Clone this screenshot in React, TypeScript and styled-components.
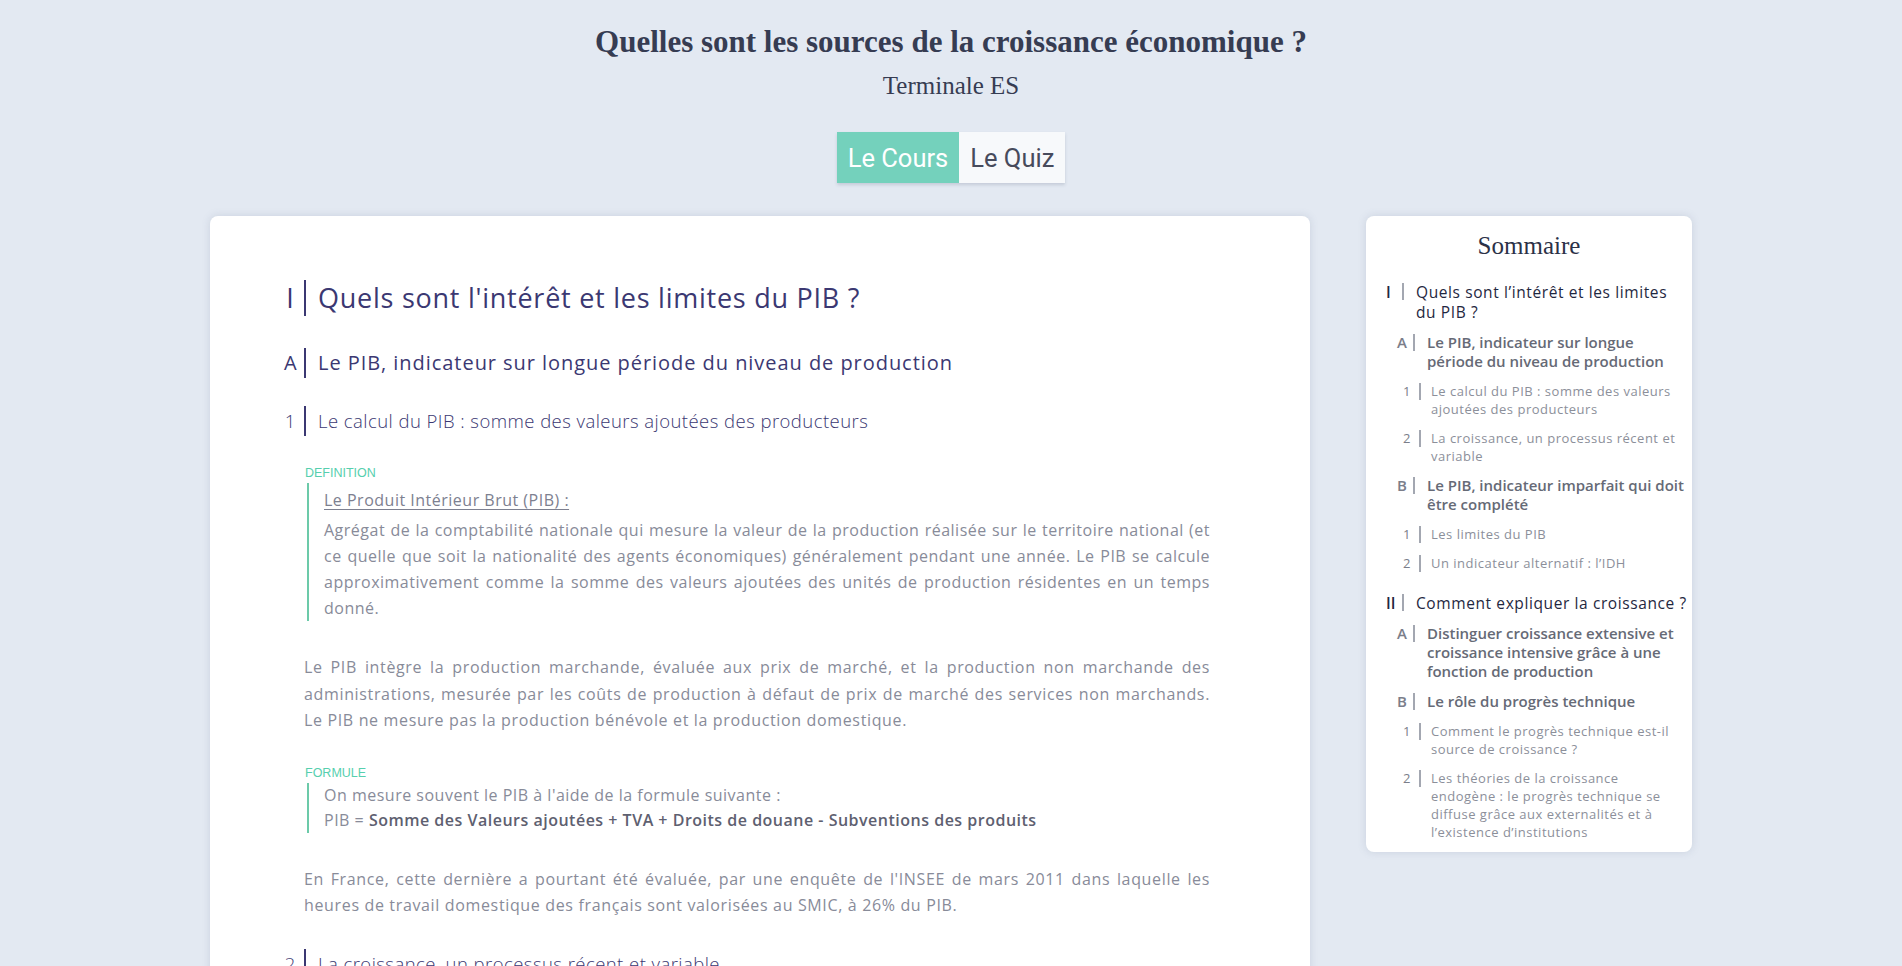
import React from 'react'
import styled, { createGlobalStyle } from 'styled-components'

const GlobalStyle = createGlobalStyle`
	html, body {
		margin: 0;
		padding: 0;
		background: #e3e9f2;
	}
	body {
		font-family: 'Open Sans', Lato, sans-serif;
	}
`

const Page = styled.div`
	min-height: 966px;
	padding-top: 24px;
`

const Header = styled.header`
	display: flex;
	flex-direction: column;
	align-items: center;
	color: #363c52;
`

const Title = styled.h1`
	margin: 0;
	font-family: 'Liberation Serif', 'DejaVu Serif', serif;
	font-weight: 700;
	font-size: 31px;
	line-height: 36px;
`

const Subtitle = styled.h2`
	margin: 12px 0 0;
	font-family: 'Liberation Serif', 'DejaVu Serif', serif;
	font-weight: 400;
	font-size: 25px;
	line-height: 28px;
`

const Tabs = styled.nav`
	display: flex;
	margin-top: 32px;
	box-shadow: 0 2px 3px rgba(60, 70, 100, 0.18);
`

const Tab = styled.button<{ active?: boolean }>`
	height: 51px;
	padding: 0 11px;
	border: none;
	font-family: Roboto, 'Liberation Sans', sans-serif;
	font-size: 25.5px;
	background: ${({ active }) => (active ? '#74d1bc' : '#f7f9fb')};
	color: ${({ active }) => (active ? '#ffffff' : '#474b5c')};
	cursor: pointer;
`

const Layout = styled.main`
	display: flex;
	justify-content: center;
	align-items: flex-start;
	gap: 56px;
	margin-top: 33px;
`

const Card = styled.article`
	box-sizing: border-box;
	width: 1100px;
	padding: 64px 100px 40px 74px;
	background: #fff;
	border-radius: 8px;
	box-shadow: 0 0 8px rgba(90, 105, 140, 0.18);
`

const headSize = { 1: 27, 2: 20, 3: 18.5 }
const headTrack = { 1: 0.75, 2: 0.95, 3: 0.45 }

const Heading = styled.div<{ level: 1 | 2 | 3; gap?: number }>`
	display: flex;
	align-items: flex-start;
	color: #3b3872;
	font-size: ${({ level }) => headSize[level]}px;
	letter-spacing: ${({ level }) => headTrack[level]}px;
	line-height: ${({ level }) => (level === 1 ? 36 : 30)}px;
	font-weight: ${({ level }) => (level === 3 ? 300 : 400)};
	margin-top: ${({ level, gap }) => gap ?? (level === 1 ? 0 : level === 2 ? 32 : 28)}px;
`

const HeadNum = styled.span`
	flex: none;
	width: 22px;
	padding-right: 8px;
	box-sizing: border-box;
	text-align: center;
	letter-spacing: 0;
	border-right: 2px solid #3b3872;
`

const HeadText = styled.span`
	margin-left: 12px;
`

const Label = styled.div<{ gap?: number }>`
	margin: ${({ gap }) => gap ?? 29}px 0 0 21px;
	font-family: 'Liberation Sans', sans-serif;
	font-size: 12.5px;
	line-height: 16px;
	color: #56cfae;
`

const Box = styled.div<{ tight?: boolean }>`
	margin: 2px 0 0 23px;
	padding: ${({ tight }) => (tight ? 0 : 4)}px 0 0 15px;
	border-left: 2px solid #6ccaa9;
`

const BoxTitle = styled.div`
	font-size: 16px;
	letter-spacing: 0.5px;
	line-height: 26px;
	color: #7d8090;
	text-decoration: underline;
	text-underline-offset: 3px;
`

const Text = styled.p<{ gap?: number }>`
	margin: ${({ gap }) => gap ?? 0}px 0 0;
	font-size: 16px;
	letter-spacing: 0.5px;
	line-height: 26px;
	color: #888b99;
	text-align: justify;
`

const FormulaLine = styled(Text)`
	line-height: 25px;
`

const Para = styled(Text)`
	margin-left: 20px;
	letter-spacing: 0.65px;
	line-height: 26.5px;
`

const Strong = styled.b`
	font-weight: 600;
	color: #5e6070;
`

const Aside = styled.aside`
	box-sizing: border-box;
	width: 326px;
	padding: 16px 11px 11px;
	background: #fff;
	border-radius: 8px;
	box-shadow: 0 0 8px rgba(90, 105, 140, 0.18);
`

const AsideTitle = styled.h3`
	margin: 0 0 22px;
	text-align: center;
	font-family: 'Liberation Serif', 'DejaVu Serif', serif;
	font-weight: 400;
	font-size: 25px;
	line-height: 28px;
	color: #2b3147;
`

const Summary = styled.div`
	padding-left: 9px;
	margin-right: -7px;
`

const Item = styled.div<{ level: 1 | 2 | 3; first?: boolean }>`
	display: flex;
	align-items: flex-start;
	margin-top: ${({ level, first }) => (first ? 0 : level === 1 ? 21 : 11)}px;
	margin-right: ${({ level }) => (level === 3 ? 11 : 0)}px;
	padding-left: ${({ level }) => (level === 1 ? 0 : level === 2 ? 11 : 17)}px;
	font-size: ${({ level }) => (level === 1 ? 15.5 : level === 2 ? 15 : 13)}px;
	letter-spacing: ${({ level }) => (level === 1 ? 0.6 : level === 2 ? 0 : 0.5)}px;
	line-height: ${({ level }) => (level === 1 ? 20 : level === 2 ? 19 : 18)}px;
	font-weight: ${({ level }) => (level === 2 ? 600 : 400)};
	color: ${({ level }) => (level === 1 ? '#1f2841' : level === 2 ? '#666a76' : '#8c8f9a')};
`

const ItemNum = styled.span<{ level: 1 | 2 | 3 }>`
	flex: none;
	width: 16px;
	letter-spacing: 0;
	font-weight: ${({ level }) => (level === 3 ? 400 : 600)};
	color: ${({ level }) => (level === 1 ? '#1f2841' : '#7b7e8a')};
`

const ItemBar = styled.span`
	flex: none;
	width: 2px;
	height: 17px;
	margin-top: 1px;
	background: #a3a7b1;
`

const ItemText = styled.span<{ level: 1 | 2 | 3 }>`
	margin-left: ${({ level }) => (level === 3 ? 10 : 12)}px;
`

type Entry = { level: 1 | 2 | 3; num: string; text: string }

const summary: Entry[] = [
	{ level: 1, num: 'I', text: 'Quels sont l’intérêt et les limites du PIB ?' },
	{ level: 2, num: 'A', text: 'Le PIB, indicateur sur longue période du niveau de production' },
	{ level: 3, num: '1', text: 'Le calcul du PIB : somme des valeurs ajoutées des producteurs' },
	{ level: 3, num: '2', text: 'La croissance, un processus récent et variable' },
	{ level: 2, num: 'B', text: 'Le PIB, indicateur imparfait qui doit être complété' },
	{ level: 3, num: '1', text: 'Les limites du PIB' },
	{ level: 3, num: '2', text: 'Un indicateur alternatif : l’IDH' },
	{ level: 1, num: 'II', text: 'Comment expliquer la croissance ?' },
	{ level: 2, num: 'A', text: 'Distinguer croissance extensive et croissance intensive grâce à une fonction de production' },
	{ level: 2, num: 'B', text: 'Le rôle du progrès technique' },
	{ level: 3, num: '1', text: 'Comment le progrès technique est-il source de croissance ?' },
	{ level: 3, num: '2', text: 'Les théories de la croissance endogène : le progrès technique se diffuse grâce aux externalités et à l’existence d’institutions' },
]

const App = () => (
	<Page>
		<GlobalStyle />
		<Header>
			<Title>Quelles sont les sources de la croissance économique ?</Title>
			<Subtitle>Terminale ES</Subtitle>
			<Tabs>
				<Tab active>Le Cours</Tab>
				<Tab>Le Quiz</Tab>
			</Tabs>
		</Header>
		<Layout>
			<Card>
				<Heading level={1}>
					<HeadNum>I</HeadNum>
					<HeadText>Quels sont l'intérêt et les limites du PIB ?</HeadText>
				</Heading>
				<Heading level={2}>
					<HeadNum>A</HeadNum>
					<HeadText>Le PIB, indicateur sur longue période du niveau de production</HeadText>
				</Heading>
				<Heading level={3}>
					<HeadNum>1</HeadNum>
					<HeadText>Le calcul du PIB : somme des valeurs ajoutées des producteurs</HeadText>
				</Heading>

				<Label>DEFINITION</Label>
				<Box>
					<BoxTitle>Le Produit Intérieur Brut (PIB) :</BoxTitle>
					<Text gap={4}>
						Agrégat de la comptabilité nationale qui mesure la valeur de la production réalisée sur le
						territoire national (et ce quelle que soit la nationalité des agents économiques) généralement
						pendant une année. Le PIB se calcule approximativement comme la somme des valeurs ajoutées des
						unités de production résidentes en un temps donné.
					</Text>
				</Box>

				<Para gap={33}>
					Le PIB intègre la production marchande, évaluée aux prix de marché, et la production non marchande
					des administrations, mesurée par les coûts de production à défaut de prix de marché des services non
					marchands. Le PIB ne mesure pas la production bénévole et la production domestique.
				</Para>

				<Label gap={31}>FORMULE</Label>
				<Box tight>
					<FormulaLine>On mesure souvent le PIB à l'aide de la formule suivante :</FormulaLine>
					<FormulaLine>
						PIB = <Strong>Somme des Valeurs ajoutées + TVA + Droits de douane - Subventions des produits</Strong>
					</FormulaLine>
				</Box>

				<Para gap={33}>
					En France, cette dernière a pourtant été évaluée, par une enquête de l'INSEE de mars 2011 dans
					laquelle les heures de travail domestique des français sont valorisées au SMIC, à 26% du PIB.
				</Para>

				<Heading level={3} gap={30}>
					<HeadNum>2</HeadNum>
					<HeadText>La croissance, un processus récent et variable</HeadText>
				</Heading>
			</Card>

			<Aside>
				<AsideTitle>Sommaire</AsideTitle>
				<Summary>
					{summary.map((e, i) => (
						<Item key={i} level={e.level} first={i === 0}>
							<ItemNum level={e.level}>{e.num}</ItemNum>
							<ItemBar />
							<ItemText level={e.level}>{e.text}</ItemText>
						</Item>
					))}
				</Summary>
			</Aside>
		</Layout>
	</Page>
)

export default App
